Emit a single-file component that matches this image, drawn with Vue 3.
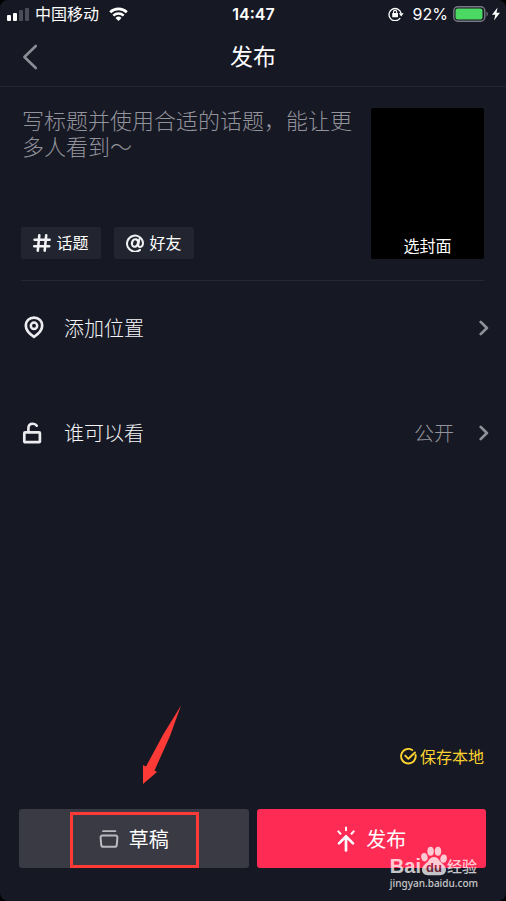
<script setup>
import { ref } from 'vue'

const title = ref('')
const saveLocal = ref(true)
</script>

<template>
  <div class="page">
    <header class="status">
      <div class="status-left">
        <svg width="23" height="13" viewBox="0 0 23 13" aria-hidden="true">
          <rect x="0" y="7" width="4" height="6" rx="1" fill="#fff" />
          <rect x="6" y="5" width="4" height="8" rx="1" fill="#fff" />
          <rect x="12" y="2" width="4" height="11" rx="1" fill="#4b4c57" />
          <rect x="18" y="0" width="4" height="13" rx="1" fill="#4b4c57" />
        </svg>
        <span class="carrier">中国移动</span>
        <svg width="19" height="14" viewBox="0 0 19 14" aria-hidden="true">
          <path d="M1.2 5.2a12 12 0 0 1 16.6 0" fill="none" stroke="#fff" stroke-width="2.8" />
          <path d="M4.3 8.7a7.5 7.5 0 0 1 10.4 0" fill="none" stroke="#fff" stroke-width="2.5" />
          <path d="M9.5 14 6.5 10.9a4.4 4.4 0 0 1 6 0z" fill="#fff" />
        </svg>
      </div>
      <time class="clock">14:47</time>
      <div class="status-right">
        <svg width="16" height="14" viewBox="0 0 16 14" aria-hidden="true">
          <path d="M12.2 11A6.1 6.1 0 1 1 13.1 6.4" fill="none" stroke="#fff" stroke-width="1.3" />
          <path d="M10.8 6.2h4.8l-2.4 3.2z" fill="#fff" />
          <rect x="4.2" y="6" width="5.8" height="4.3" rx=".6" fill="#fff" />
          <path d="M5.5 6.4V5a1.6 1.6 0 0 1 3.2 0v1.4" fill="none" stroke="#fff" stroke-width="1.1" />
        </svg>
        <span class="percent">92%</span>
        <svg width="36" height="16" viewBox="0 0 36 16" aria-hidden="true">
          <rect x=".8" y=".8" width="31" height="14.4" rx="4" fill="none" stroke="#777983" stroke-width="1.4" />
          <rect x="2.5" y="2.5" width="27" height="11" rx="2" fill="#4bd964" />
          <path d="M33.5 5.5a3 3 0 0 1 0 5z" fill="#777983" />
        </svg>
        <svg class="bolt" width="8" height="14" viewBox="0 0 8 14" aria-hidden="true">
          <path d="M5.6.5 0 7.8h3.3L2 13.5 8 5.8H4.5z" fill="#fff" />
        </svg>
      </div>
    </header>

    <nav class="nav">
      <button class="back" type="button" aria-label="返回">
        <svg width="16" height="26" viewBox="0 0 16 26" aria-hidden="true">
          <path d="M13.8 2 2.4 13l11.4 11" fill="none" stroke="#8b8c95" stroke-width="2.6" stroke-linecap="round" stroke-linejoin="round" />
        </svg>
      </button>
      <h1>发布</h1>
    </nav>

    <main class="main">
      <section class="composer">
        <div class="write">
          <textarea v-model="title" aria-label="标题" placeholder="写标题并使用合适的话题，能让更多人看到～"></textarea>
          <div class="chips">
            <button class="chip" type="button">
              <svg width="18" height="18" viewBox="0 0 18 18" aria-hidden="true">
                <path d="M6.3 1.4 4.8 16.6M13.2 1.4l-1.5 15.2M1.6 5.8h15M1.2 12.2h15" fill="none" stroke="#f2f2f5" stroke-width="2.6" stroke-linecap="round" />
              </svg>
              <span class="chip-text">话题</span>
            </button>
            <button class="chip" type="button">
              <svg width="18" height="18" viewBox="0 0 18 18" aria-hidden="true">
                <path d="M14 15.9A8 8 0 1 1 17 8.8c0 2.5-1.3 4.1-2.9 4.1-1.5 0-2-1-1.7-2.6l.9-5" fill="none" stroke="#f2f2f5" stroke-width="2" stroke-linecap="round" />
                <ellipse cx="9" cy="9" rx="3" ry="3.8" transform="rotate(18 9 9)" fill="none" stroke="#f2f2f5" stroke-width="2.2" />
              </svg>
              <span class="chip-text">好友</span>
            </button>
          </div>
        </div>
        <button class="cover" type="button">选封面</button>
      </section>

      <section class="options">
        <button class="row" type="button">
          <svg class="row-icon" width="24" height="24" viewBox="0 0 24 24" aria-hidden="true">
            <path d="M12 1.6c-4.9 0-8.2 3.5-8.2 8 0 4.2 3.4 8.3 8.2 11.2 4.8-2.9 8.2-7 8.2-11.2 0-4.5-3.3-8-8.2-8z" fill="none" stroke="#ebebf0" stroke-width="2.7" stroke-linejoin="round" />
            <circle cx="12" cy="9.8" r="3.2" fill="none" stroke="#ebebf0" stroke-width="2.5" />
          </svg>
          <span class="row-label">添加位置</span>
          <svg class="chevron" width="10" height="16" viewBox="0 0 10 16" aria-hidden="true">
            <path d="m1.7 1.9 6.2 6.1-6.2 6.1" fill="none" stroke="#8f9099" stroke-width="2.7" stroke-linecap="round" stroke-linejoin="round" />
          </svg>
        </button>
        <button class="row" type="button">
          <svg class="row-icon" width="24" height="24" viewBox="0 0 24 24" aria-hidden="true">
            <rect x="2.3" y="11.4" width="15.6" height="9.8" rx=".8" fill="none" stroke="#ebebf0" stroke-width="2.7" />
            <path d="M6.4 11V7.2c0-2.9 1.9-4.5 4.4-4.5 1.8 0 3.2.7 4 2" fill="none" stroke="#ebebf0" stroke-width="2.6" stroke-linecap="round" />
          </svg>
          <span class="row-label">谁可以看</span>
          <span class="row-value">公开</span>
          <svg class="chevron" width="10" height="16" viewBox="0 0 10 16" aria-hidden="true">
            <path d="m1.7 1.9 6.2 6.1-6.2 6.1" fill="none" stroke="#8f9099" stroke-width="2.7" stroke-linecap="round" stroke-linejoin="round" />
          </svg>
        </button>
      </section>
    </main>

    <footer class="footer">
      <label class="save">
        <span class="tick">
          <input v-model="saveLocal" type="checkbox" />
          <svg width="17" height="17" viewBox="0 0 17 17" aria-hidden="true">
            <path d="M12.2 2A7.3 7.3 0 1 0 15.6 7" fill="none" stroke="#fad22f" stroke-width="1.9" stroke-linecap="round" />
            <path v-if="saveLocal" d="m5.2 7.6 3.2 3.2 6.6-6.3" fill="none" stroke="#fad22f" stroke-width="1.9" stroke-linecap="round" stroke-linejoin="round" />
          </svg>
        </span>
        <span>保存本地</span>
      </label>
      <div class="actions">
        <button class="action draft" type="button">
          <svg width="20" height="20" viewBox="0 0 20 20" aria-hidden="true">
            <path d="M4 2.2h12.4" fill="none" stroke="#b9bac0" stroke-width="1.8" stroke-linecap="round" />
            <path d="M3.4 6.6h13.2q2 0 1.8 2l-.6 7.200q-.2 2-2.200 2H4.400q-2 0-2.200-2L1.600 8.600q-.2-2 1.800-2z" fill="none" stroke="#b9bac0" stroke-width="2" />
          </svg>
          <span>草稿</span>
        </button>
        <button class="action publish" type="button">
          <svg width="20" height="26" viewBox="0 0 20 26" aria-hidden="true">
            <path d="M10 24.5V11M3 17.4l7-7 7 7" fill="none" stroke="#fff" stroke-width="2.7" stroke-linecap="round" />
            <path d="M10 1.4v2.8M2.3 5.4l2.2 2.300M17.700 5.400l-2.200 2.300" fill="none" stroke="#fff" stroke-width="2" stroke-linecap="round" />
          </svg>
          <span>发布</span>
        </button>
        <div class="highlight"></div>
        <svg class="arrow" width="40" height="80" viewBox="0 0 40 80" aria-hidden="true">
          <path d="M39 1.500 21.500 30 4 62.500 1 61v19l14-12-2.500-1.500L28 32z" fill="#fd3a36" />
        </svg>
      </div>
    </footer>

    <div class="watermark">
      <div class="brand">
        <span class="bai">Bai</span>
        <span class="paw">
          <svg width="26" height="30" viewBox="0 0 26 30" aria-hidden="true">
            <ellipse cx="9.600" cy="5.200" rx="3.200" ry="4.500" />
            <ellipse cx="17" cy="5.200" rx="3.200" ry="4.500" />
            <ellipse cx="3.400" cy="11.200" rx="3.200" ry="4.200" transform="rotate(-12 3.400 11.200)" />
            <ellipse cx="22.600" cy="12.600" rx="3.200" ry="4.200" transform="rotate(12 22.600 12.600)" />
            <path d="M13 11c-3 0-4.400 2-6 4.200C5 17.800 1 19.500 1 23.800c0 3.600 2.700 5.400 6 5.400h12c3.300 0 6-1.800 6-5.400 0-4.300-4-6-6-8.600-1.600-2.200-3-4.200-6-4.200z" />
          </svg>
          <span class="du">du</span>
        </span>
        <span class="jy">经验</span>
      </div>
      <div class="site">jingyan.baidu.com</div>
    </div>
  </div>
</template>

<style>
body {
  margin: 0;
  background: #000;
}
</style>

<style scoped>
.page {
  position: relative;
  display: flex;
  flex-direction: column;
  min-height: 100vh;
  box-sizing: border-box;
  overflow: hidden;
  border-radius: 8px;
  background: #161823;
  color: #fff;
  font-family: "Noto Sans CJK SC", sans-serif;
}

button {
  margin: 0;
  padding: 0;
  border: 0;
  background: none;
  color: inherit;
  font: inherit;
  cursor: pointer;
}

svg {
  display: block;
  flex: none;
}

.status {
  display: grid;
  grid-template-columns: 1fr auto 1fr;
  align-items: center;
  height: 28px;
  padding: 0 6px 0 7px;
}

.status-left,
.status-right {
  display: flex;
  align-items: center;
}

.status-right {
  justify-content: flex-end;
}

.carrier {
  margin: 0 10px 0 5px;
  padding-bottom: 2px;
  font-size: 16px;
  line-height: 24px;
}

.clock {
  font: 600 16px/24px Inter, sans-serif;
}

.percent {
  margin: 0 5px 0 9px;
  font: 400 16px/24px Inter, sans-serif;
}

.bolt {
  margin-left: 3px;
}

.nav {
  display: grid;
  grid-template-columns: 46px 1fr 46px;
  align-items: center;
  height: 58px;
  border-bottom: 1px solid #23252f;
}

.back {
  display: flex;
  justify-content: flex-end;
  padding: 8px;
}

h1 {
  margin: 0;
  padding-bottom: 4px;
  font-size: 23px;
  font-weight: 400;
  line-height: 32px;
  text-align: center;
}

.main {
  flex: 1;
  padding: 0 22px 0 21px;
}

.composer {
  display: flex;
  gap: 17px;
  padding: 19px 0 21px;
  border-bottom: 1px solid #262832;
}

.write {
  display: flex;
  flex: 1;
  flex-direction: column;
  min-width: 0;
}

textarea {
  flex: 1;
  box-sizing: border-box;
  width: 100%;
  min-height: 121px;
  margin: 0;
  padding: 0 0 0 1px;
  border: 0;
  outline: 0;
  resize: none;
  background: none;
  color: #fff;
  font: 300 22px/26px "Noto Sans CJK SC", sans-serif;
}

textarea::placeholder {
  color: #92939b;
  opacity: 1;
}

.chips {
  display: flex;
  gap: 13px;
}

.chip {
  display: flex;
  align-items: center;
  justify-content: center;
  gap: 5px;
  width: 80px;
  height: 32px;
  border-radius: 2px;
  background: #22252f;
  font-size: 16px;
}

.chip-text {
  padding-bottom: 2px;
}

.cover {
  display: flex;
  align-items: flex-end;
  align-self: flex-end;
  justify-content: center;
  width: 113px;
  height: 151px;
  border-radius: 2px;
  background: #000;
  font-size: 16px;
  line-height: 28px;
}

.options {
  display: flex;
  flex-direction: column;
  gap: 11px;
}

.row {
  display: flex;
  align-items: center;
  width: 100%;
  height: 94px;
  text-align: left;
}

.row-icon {
  margin: 0 18px 0 1px;
}

.row-label {
  flex: 1;
  padding-bottom: 2px;
  color: #f4f4f8;
  font-size: 20px;
  font-weight: 300;
}

.row-value {
  margin-right: 25px;
  padding-bottom: 2px;
  color: #92939b;
  font-size: 20px;
  font-weight: 300;
}

.chevron {
  margin-right: -5px;
}

.footer {
  padding: 0 20px 33px 19px;
}

.save {
  display: flex;
  align-items: center;
  justify-content: flex-end;
  gap: 3px;
  margin: 0 2px 41px 0;
  color: #fad22f;
  font-size: 16px;
  line-height: 24px;
}

.tick {
  display: grid;
}

.tick > * {
  grid-area: 1 / 1;
}

.tick input {
  width: 17px;
  height: 17px;
  margin: 0;
  appearance: none;
}

.actions {
  position: relative;
  display: grid;
  grid-template-columns: 1fr 1fr;
  gap: 8px;
}

.action {
  display: flex;
  align-items: center;
  justify-content: center;
  gap: 10px;
  height: 59px;
  border-radius: 3px;
  font-size: 20px;
  font-weight: 400;
}

.draft {
  background: #393a44;
}

.publish {
  background: #fe2c55;
}

.highlight {
  position: absolute;
  top: 3px;
  left: 51px;
  box-sizing: border-box;
  width: 129px;
  height: 56px;
  border: 3px solid #fd3a36;
  pointer-events: none;
}

.arrow {
  position: absolute;
  top: -105px;
  left: 123px;
  pointer-events: none;
}

.watermark {
  position: absolute;
  right: 28px;
  bottom: 11px;
  color: #fff;
  opacity: 0.75;
  pointer-events: none;
}

.brand {
  display: flex;
  align-items: flex-end;
  height: 30px;
}

.bai {
  font: 700 20px/20px "Liberation Sans", sans-serif;
}

.paw {
  display: grid;
  fill: #fff;
}

.paw > * {
  grid-area: 1 / 1;
}

.du {
  align-self: end;
  color: #8a2540;
  font: 700 13px/16px "Liberation Sans", sans-serif;
  text-align: center;
}

.jy {
  font-size: 15px;
  font-weight: 500;
  line-height: 20px;
}

.site {
  font: 500 10px/14px "Noto Sans", sans-serif;
}
</style>
